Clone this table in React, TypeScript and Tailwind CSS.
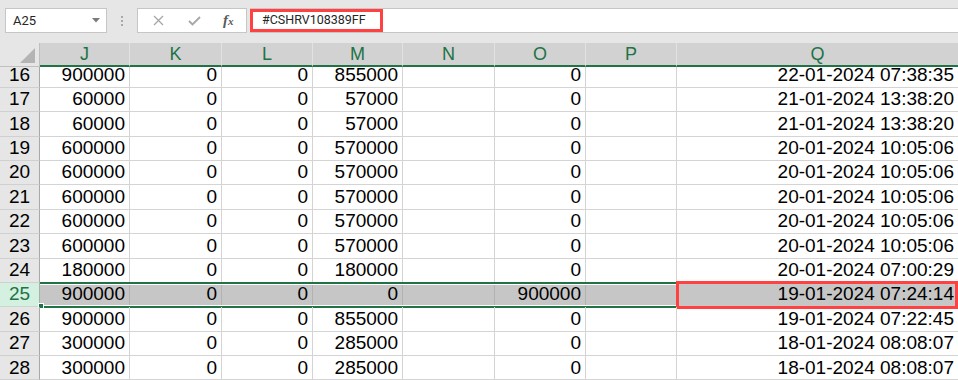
const cols = [
  { key: "J", w: "w-[90px]" },
  { key: "K", w: "w-[92px]" },
  { key: "L", w: "w-[91px]" },
  { key: "M", w: "w-[90px]" },
  { key: "N", w: "w-[92px]" },
  { key: "O", w: "w-[91px]" },
  { key: "P", w: "w-[91px]" },
];

type Row = { n: number; cells: string[]; date: string };

const rows: Row[] = [
  { n: 16, cells: ["900000", "0", "0", "855000", "", "0", ""], date: "22-01-2024 07:38:35" },
  { n: 17, cells: ["60000", "0", "0", "57000", "", "0", ""], date: "21-01-2024 13:38:20" },
  { n: 18, cells: ["60000", "0", "0", "57000", "", "0", ""], date: "21-01-2024 13:38:20" },
  { n: 19, cells: ["600000", "0", "0", "570000", "", "0", ""], date: "20-01-2024 10:05:06" },
  { n: 20, cells: ["600000", "0", "0", "570000", "", "0", ""], date: "20-01-2024 10:05:06" },
  { n: 21, cells: ["600000", "0", "0", "570000", "", "0", ""], date: "20-01-2024 10:05:06" },
  { n: 22, cells: ["600000", "0", "0", "570000", "", "0", ""], date: "20-01-2024 10:05:06" },
  { n: 23, cells: ["600000", "0", "0", "570000", "", "0", ""], date: "20-01-2024 10:05:06" },
  { n: 24, cells: ["180000", "0", "0", "180000", "", "0", ""], date: "20-01-2024 07:00:29" },
  { n: 25, cells: ["900000", "0", "0", "0", "", "900000", ""], date: "19-01-2024 07:24:14" },
  { n: 26, cells: ["900000", "0", "0", "855000", "", "0", ""], date: "19-01-2024 07:22:45" },
  { n: 27, cells: ["300000", "0", "0", "285000", "", "0", ""], date: "18-01-2024 08:08:07" },
  { n: 28, cells: ["300000", "0", "0", "285000", "", "0", ""], date: "18-01-2024 08:08:07" },
];

function FormulaBar() {
  return (
    <div className="flex h-[43px] items-start bg-[#e6e6e6] pt-[8px] font-[Roboto,sans-serif]">
      {/* name box */}
      <div className="ml-[5px] flex h-[25px] w-[102px] items-center justify-between border border-[#c6c6c6] bg-white pl-[7px] pr-[6px]">
        <span className="text-[13px] text-[#262626]">A25</span>
        <svg width="8" height="5" viewBox="0 0 8 5">
          <path d="M0 0 L8 0 L4 4.5 Z" fill="#7a7a7a" />
        </svg>
      </div>

      <div className="flex h-[25px] w-[30px] flex-col items-center justify-center gap-[2px]">
        <span className="h-[2px] w-[2px] bg-[#a8a8a8]" />
        <span className="h-[2px] w-[2px] bg-[#a8a8a8]" />
        <span className="h-[2px] w-[2px] bg-[#a8a8a8]" />
      </div>

      {/* cancel / enter / fx */}
      <div className="flex h-[25px] w-[110px] items-center border border-[#c6c6c6] bg-white">
        <svg className="ml-[15px]" width="11" height="11" viewBox="0 0 11 11">
          <path d="M1 1 L10 10 M10 1 L1 10" stroke="#a6a6a6" strokeWidth="1.3" />
        </svg>
        <svg className="ml-[24px]" width="13" height="10" viewBox="0 0 13 10">
          <path d="M1 5 L4.5 8.5 L12 1" stroke="#a6a6a6" strokeWidth="1.8" fill="none" />
        </svg>
        <span className="ml-[22px] font-['Liberation_Serif',serif] text-[15px] font-semibold italic text-[#5a5a5a]">
          f<span className="text-[11px]">x</span>
        </span>
      </div>

      <div className="ml-[3px] flex h-[25px] flex-1 items-stretch border-y border-[#c6c6c6] bg-white">
        <div className="flex w-[133px] items-center border-[3px] border-[#ff4141] pl-[9px]">
          <span className="text-[12.5px] text-[#262626]">#CSHRV108389FF</span>
        </div>
      </div>
    </div>
  );
}

function Header() {
  return (
    <div className="flex h-[24px]">
      <div className="relative w-[40px] border-b border-r border-[#bfbfbf] bg-[#e6e6e6]">
        <svg className="absolute bottom-[3px] right-[4px]" width="15" height="15" viewBox="0 0 15 15">
          <path d="M15 0 L15 15 L0 15 Z" fill="#b4b4b4" />
        </svg>
      </div>
      {cols.map((c) => (
        <div
          key={c.key}
          className={`${c.w} flex items-center justify-center border-b-2 border-r border-b-[#217346] border-r-[#e2e2e2] bg-[#d2d2d2] text-[18px] text-[#217346]`}
        >
          {c.key}
        </div>
      ))}
      <div className="flex flex-1 items-center justify-center border-b-2 border-[#217346] bg-[#d2d2d2] text-[18px] text-[#217346]">
        Q
      </div>
    </div>
  );
}

function DataRow({ row, first }: { row: Row; first: boolean }) {
  const sel = row.n === 25;
  // the top row is scrolled partly under the column header
  const fit = first ? "items-start leading-[16px]" : "items-center";
  return (
    <div className={first ? "relative flex h-[20.8px]" : "relative flex h-[24.4px]"}>
      <div
        className={
          sel
            ? `flex w-[40px] ${fit} justify-center border-b border-r border-b-[#c8d8cf] border-r-[#9fb5a8] bg-[#d3f0e0] text-[19px] text-[#217346]`
            : `flex w-[40px] ${fit} justify-center border-b border-r border-b-[#d0d0d0] border-r-[#a8a8a8] bg-[#e6e6e6] text-[19px] text-black`
        }
      >
        {row.n}
      </div>
      {cols.map((c, i) => (
        <div
          key={c.key}
          className={`${c.w} flex ${fit} justify-end border-b border-r pr-[4px] text-[19px] text-black ${
            sel ? "border-r-[#b2b2b2] bg-[#c6c6c6]" : "border-[#d4d4d4]"
          }`}
        >
          {row.cells[i]}
        </div>
      ))}
      <div
        className={`flex flex-1 ${fit} justify-end whitespace-nowrap border-b pr-[4px] text-[19px] text-black ${
          sel ? "bg-[#c6c6c6]" : "border-[#d4d4d4]"
        }`}
      >
        {row.date}
      </div>

      {sel && (
        <>
          {/* selected range outline */}
          <div className="pointer-events-none absolute left-[40px] top-[-1px] h-[26.4px] w-[637px] border-y-2 border-[#217346]">
            <div className="h-full w-full border-y border-white" />
          </div>
          {/* fill handle */}
          <div className="absolute left-[38px] top-[20px] h-[6px] w-[6px] border border-white bg-[#217346]" />
          {/* highlighted cell */}
          <div className="pointer-events-none absolute left-[676px] right-0 top-[-2px] h-[28px] border-[3px] border-[#ff4141]" />
        </>
      )}
    </div>
  );
}

export default function App() {
  return (
    <div className="h-[380px] w-[958px] overflow-hidden bg-white font-['Liberation_Sans',Arial,sans-serif]">
      <FormulaBar />
      <Header />
      <div>
        {rows.map((r, i) => (
          <DataRow key={r.n} row={r} first={i === 0} />
        ))}
      </div>
    </div>
  );
}
